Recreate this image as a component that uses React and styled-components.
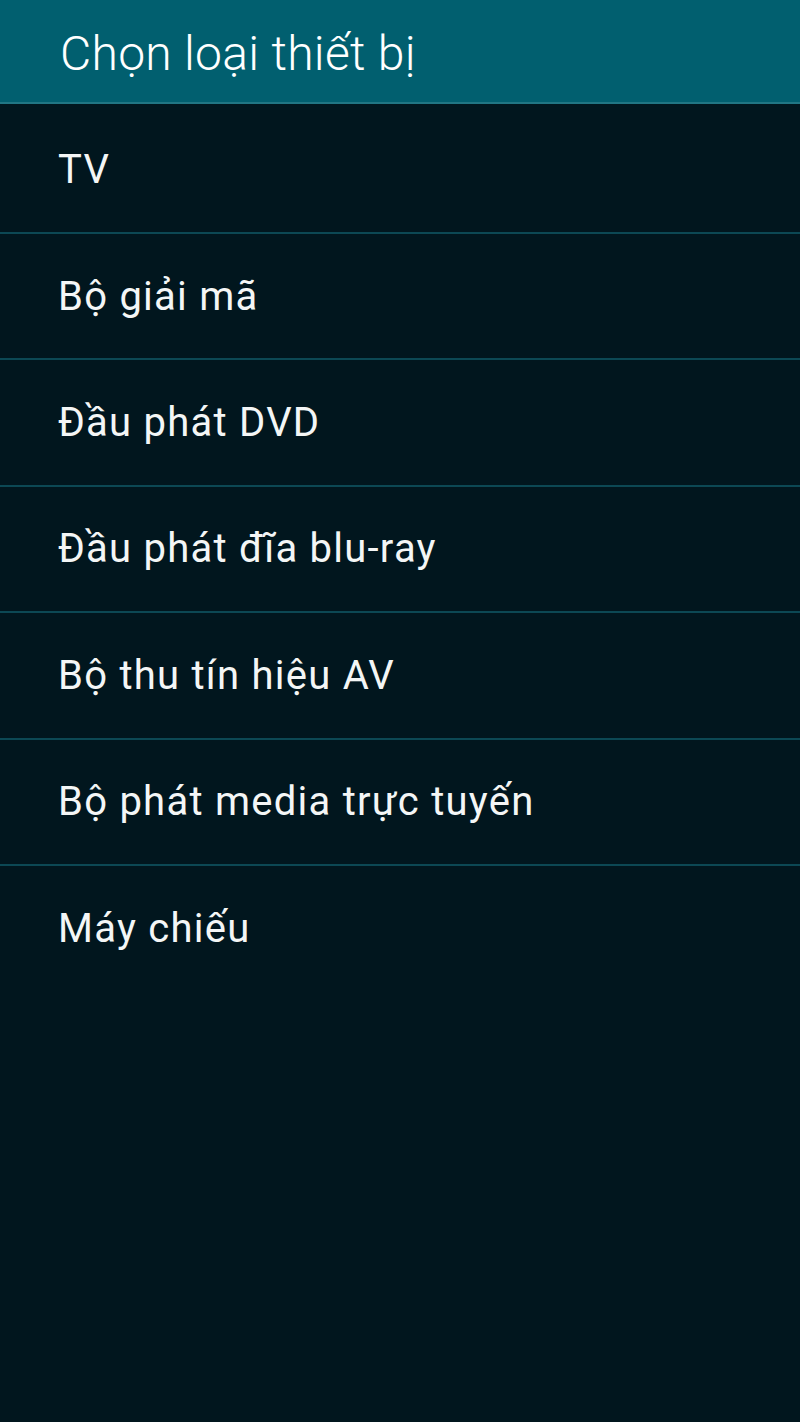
import React from "react";
import styled, { createGlobalStyle } from "styled-components";

const GlobalStyle = createGlobalStyle`
  html, body {
    margin: 0;
    padding: 0;
    background: #01161e;
  }
  body {
    font-family: Roboto, "Noto Sans", sans-serif;
  }
`;

const devices = [
  "TV",
  "Bộ giải mã",
  "Đầu phát DVD",
  "Đầu phát đĩa blu-ray",
  "Bộ thu tín hiệu AV",
  "Bộ phát media trực tuyến",
  "Máy chiếu",
];

const App = () => {
  return (
    <Screen>
      <GlobalStyle />
      <Header>
        <Title>Chọn loại thiết bị</Title>
      </Header>
      <List>
        {devices.map((name, i) => (
          <Row key={name} last={i === devices.length - 1}>
            <Label>{name}</Label>
          </Row>
        ))}
      </List>
    </Screen>
  );
};

const Screen = styled.div`
  width: 800px;
  height: 1422px;
  background: #01161e;
  overflow: hidden;
`;

const Header = styled.div`
  box-sizing: border-box;
  height: 104px;
  background: #015f6f;
  border-bottom: 2px solid #217684;
  display: flex;
  align-items: center;
  padding-left: 60px;
  padding-top: 4px;
`;

const Title = styled.h1`
  margin: 0;
  font-family: Roboto, sans-serif;
  font-weight: 300;
  font-size: 48px;
  color: #ffffff;
  letter-spacing: 0.3px;
`;

const List = styled.div`
  padding-top: 3.6px;
  display: flex;
  flex-direction: column;
`;

const Row = styled.div.withConfig({
  shouldForwardProp: (p) => p !== "last",
})`
  box-sizing: border-box;
  height: 126.4px;
  display: flex;
  align-items: center;
  padding-left: 58px;
  border-bottom: 2px solid ${(p) => (p.last ? "transparent" : "#0c4854")};
`;

const Label = styled.span`
  font-family: Roboto, sans-serif;
  font-weight: 400;
  font-size: 40px;
  letter-spacing: 1.25px;
  color: #f4f6f6;
`;

export default App;
